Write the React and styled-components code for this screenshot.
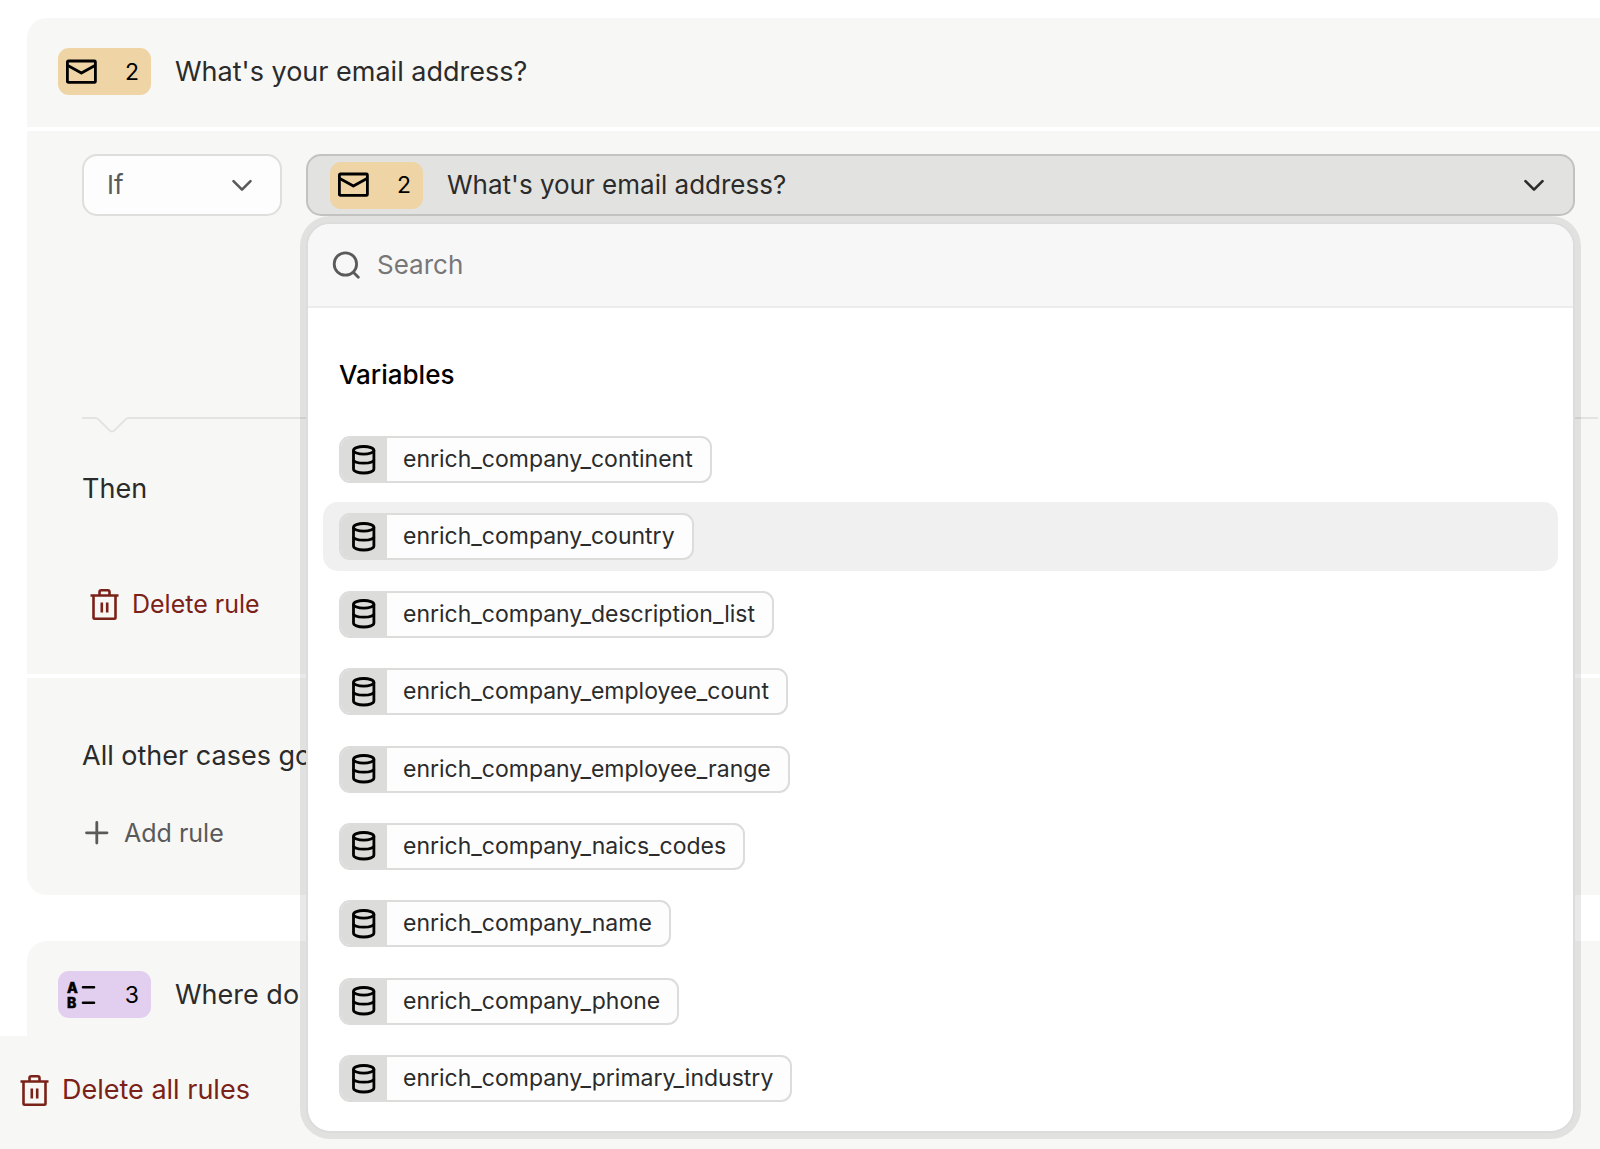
import React, { useState } from 'react';
import styled, { createGlobalStyle } from 'styled-components';

const GlobalStyle = createGlobalStyle`
  * {
    box-sizing: border-box;
  }

  body {
    margin: 0;
    background: #ffffff;
    color: #2b2b2b;
    font-family: Inter, 'Liberation Sans', sans-serif;
    font-size: 26px;
    line-height: 32px;
  }

  button,
  input,
  select {
    font: inherit;
    color: inherit;
  }
`;

const Page = styled.div`
  display: flex;
  flex-direction: column;
  min-height: 100vh;
  overflow: hidden;
`;

const Cards = styled.main`
  display: flex;
  flex-direction: column;
  gap: 46px;
  padding: 18px 0 0 27px;
`;

const Card = styled.section`
  display: flex;
  flex-direction: column;
  gap: 4px;
`;

const CardPart = styled.div`
  background: #f7f7f5;

  &:first-child {
    border-top-left-radius: 20px;
  }
`;

const CardHeader = styled(CardPart)`
  display: flex;
  align-items: center;
  gap: 24px;
  padding: 30px 31px ${(props) => (props.$short ? '18px' : '32px')};
`;

const RuleBody = styled(CardPart)`
  padding: 23px 0 46px 55px;
`;

const OtherCases = styled(CardPart)`
  padding: 62px 55px 38px;
  border-bottom-left-radius: 20px;
`;

const Title = styled.h2`
  margin: 0;
  font-size: 27px;
  font-weight: 400;
  white-space: nowrap;
`;

const Badge = styled.span`
  display: inline-flex;
  align-items: center;
  justify-content: space-between;
  flex: none;
  width: 93px;
  height: 47px;
  padding: 0 12px 0 7px;
  border-radius: 11px;
  background: ${(props) => props.$color};
  color: #000000;
  font-size: 23px;
`;

const Condition = styled.div`
  display: flex;
  gap: 24px;
  margin: 0 25px 201px 0;
`;

const OperatorField = styled.label`
  display: grid;
  align-items: center;
  width: 200px;
  height: 62px;
  color: #5a5a5a;

  > * {
    grid-area: 1 / 1;
  }

  svg {
    justify-self: end;
    margin-right: 29px;
    pointer-events: none;
  }
`;

const OperatorSelect = styled.select`
  width: 100%;
  height: 100%;
  padding: 0 23px;
  border: 2px solid #dededc;
  border-radius: 15px;
  background: #fdfdfd;
  appearance: none;
`;

const Picker = styled.div`
  position: relative;
  flex: 1;
`;

const PickerButton = styled.button`
  display: flex;
  align-items: center;
  gap: 24px;
  width: 100%;
  height: 62px;
  padding: 0 28px 0 22px;
  border: 2px solid #c2c2c0;
  border-radius: 15px;
  background: #e2e2e0;
  text-align: left;

  > svg {
    margin-left: auto;
  }
`;

const Popup = styled.div`
  position: absolute;
  z-index: 2;
  top: calc(100% + 6px);
  left: 0;
  right: 0;
  border: 2px solid #dcdcdc;
  border-radius: 24px;
  background: #ffffff;
  box-shadow: 0 0 0 6px rgba(0, 0, 0, 0.085);
`;

const SearchBar = styled.label`
  display: flex;
  align-items: center;
  gap: 17px;
  height: 84px;
  padding: 0 24px;
  border-bottom: 2px solid #ececec;
  border-radius: 22px 22px 0 0;
  background: #f7f7f7;
  color: #5a5a5a;
`;

const SearchInput = styled.input`
  flex: 1;
  min-width: 0;
  padding: 0;
  border: 0;
  outline: 0;
  background: transparent;

  &::placeholder {
    color: #777777;
    opacity: 1;
  }
`;

const GroupTitle = styled.h3`
  margin: 51px 31px 34px;
  color: #000000;
  font-size: 26px;
  font-weight: 500;
`;

const VariableList = styled.ul`
  display: flex;
  flex-direction: column;
  justify-content: space-between;
  min-height: 688px;
  margin: 0 15px 18px;
  padding: 0;
  list-style: none;
`;

const VariableOption = styled.button`
  display: flex;
  width: 100%;
  padding: 11px 16px;
  border: 0;
  border-radius: 15px;
  background: ${(props) => (props.$active ? '#f0f0f0' : 'transparent')};
`;

const Chip = styled.span`
  display: flex;
  height: 47px;
  border: 2px solid #dcdcda;
  border-radius: 11px;
  background: #fdfdfd;
  overflow: hidden;
`;

const ChipIcon = styled.span`
  display: flex;
  align-items: center;
  justify-content: center;
  width: 46px;
  background: #dcdcda;
  color: #000000;
`;

const ChipName = styled.span`
  padding: 0 17px 0 16px;
  font-size: 23px;
  line-height: 43px;
`;

const RuleDivider = styled.div`
  display: flex;
  height: 16px;
  margin-right: 2px;
  color: #e3e3e1;

  &::after {
    content: '';
    flex: 1;
    height: 2px;
    background: currentColor;
  }
`;

const Then = styled.p`
  margin: 40px 0 75px;
  font-size: 27px;
`;

const OtherText = styled.p`
  margin: 0 0 37px;
  font-size: 27px;
  white-space: nowrap;
`;

const TextButton = styled.button`
  display: inline-flex;
  align-items: center;
  gap: ${(props) => (props.$muted ? '14px' : '12px')};
  height: 48px;
  padding: 0 ${(props) => (props.$muted ? '2px' : '8px')};
  border: 0;
  background: transparent;
  color: ${(props) => (props.$muted ? '#5a5a5a' : '#7b2218')};
  font-size: ${(props) => (props.$large ? '27px' : '25px')};
`;

const Footer = styled.footer`
  flex: 1;
  padding: 30px 12px;
  background: #f7f7f5;
`;

const MailIcon = () => (
  <svg width="32" height="28" viewBox="0 0 32 28" fill="none" stroke="currentColor" strokeWidth="2.8" strokeLinejoin="round">
    <rect x="2.4" y="3" width="28" height="21.4" rx="1" />
    <path d="M2.800 7.6 16.400 15 30 7.6" />
  </svg>
);

const ChoiceIcon = () => (
  <svg width="32" height="40" viewBox="0 0 32 40" fill="currentColor">
    <text x="2" y="17.5" fontSize="14" fontWeight="800" stroke="currentColor" strokeWidth="0.5">A</text>
    <text x="2" y="33" fontSize="14" fontWeight="800" stroke="currentColor" strokeWidth="0.5">B</text>
    <path d="M18 12.300h11M18 27.800h11" stroke="currentColor" strokeWidth="2.6" strokeLinecap="round" />
  </svg>
);

const ChevronIcon = () => (
  <svg width="22" height="14" viewBox="0 0 22 14" fill="none" stroke="currentColor" strokeWidth="2.6" strokeLinecap="round" strokeLinejoin="round">
    <path d="m2.500 3.200 8.500 8.500 8.500-8.500" />
  </svg>
);

const SearchIcon = () => (
  <svg width="28" height="30" viewBox="0 0 28 30" fill="none" stroke="currentColor" strokeWidth="2.8" strokeLinecap="round">
    <circle cx="13.400" cy="14" r="11.200" />
    <path d="m21.300 22.200 5 5" />
  </svg>
);

const DatabaseIcon = () => (
  <svg width="24" height="30" viewBox="0 0 24 30" fill="none" stroke="currentColor" strokeWidth="2.8">
    <ellipse cx="11.700" cy="5.300" rx="10.200" ry="3.800" />
    <path d="M1.500 5.300v18.700c0 2.300 4.500 4 10.200 4s10.200-1.700 10.200-4V5.300" />
    <path d="M1.500 14.800c0 2 4.500 3.400 10.200 3.400s10.200-1.400 10.200-3.400" />
  </svg>
);

const TrashIcon = () => (
  <svg width="30" height="32" viewBox="0 0 30 32" fill="none" stroke="currentColor" strokeWidth="2.600" strokeLinejoin="round">
    <path d="M.500 7.500h28M9.500 7.500V4c0-1 .7-1.800 1.800-1.800h6.400c1.100 0 1.800.8 1.800 1.800v3.500" />
    <path d="M3.500 7.500v22c0 .7.500 1.200 1.200 1.200h19.600c.7 0 1.200-.5 1.200-1.200v-22" />
    <path d="M11.800 14.500v10M17.200 14.500v10" />
  </svg>
);

const PlusIcon = () => (
  <svg width="26" height="26" viewBox="0 0 26 26" fill="none" stroke="currentColor" strokeWidth="2.800" strokeLinecap="round">
    <path d="M12.800 2.500v20.500M2.500 12.800h20.500" />
  </svg>
);

const NotchIcon = () => (
  <svg width="50" height="16" viewBox="0 0 50 16" fill="none" stroke="currentColor" strokeWidth="2">
    <path d="M0 1h13c1.500 0 2.500.4 3.500 1.400l11 11c1.500 1.500 3.500 1.500 5 0l11-11C44.500 1.400 45.500 1 47 1h3" />
  </svg>
);

const variables = [
  'enrich_company_continent',
  'enrich_company_country',
  'enrich_company_description_list',
  'enrich_company_employee_count',
  'enrich_company_employee_range',
  'enrich_company_naics_codes',
  'enrich_company_name',
  'enrich_company_phone',
  'enrich_company_primary_industry',
];

const App = () => {
  const [active, setActive] = useState('enrich_company_country');
  const [search, setSearch] = useState('');

  const visible = variables.filter((name) => name.includes(search.toLowerCase()));

  return (
    <>
      <GlobalStyle />
      <Page>
        <Cards>
          <Card>
            <CardHeader>
              <Badge $color="#efd4a6"><MailIcon />2</Badge>
              <Title>What's your email address?</Title>
            </CardHeader>
            <RuleBody>
              <Condition>
                <OperatorField>
                  <OperatorSelect aria-label="Operator" defaultValue="if">
                    <option value="if">If</option>
                  </OperatorSelect>
                  <ChevronIcon />
                </OperatorField>
                <Picker>
                  <PickerButton type="button" aria-haspopup="listbox" aria-expanded="true">
                    <Badge $color="#efd4a6"><MailIcon />2</Badge>
                    What's your email address?
                    <ChevronIcon />
                  </PickerButton>
                  <Popup>
                    <SearchBar>
                      <SearchIcon />
                      <SearchInput
                        type="text"
                        aria-label="Search"
                        placeholder="Search"
                        value={search}
                        onChange={(e) => setSearch(e.target.value)}
                      />
                    </SearchBar>
                    <GroupTitle>Variables</GroupTitle>
                    <VariableList>
                      {visible.map((name) => (
                        <li key={name}>
                          <VariableOption
                            type="button"
                            $active={name === active}
                            onMouseEnter={() => setActive(name)}
                          >
                            <Chip>
                              <ChipIcon><DatabaseIcon /></ChipIcon>
                              <ChipName>{name}</ChipName>
                            </Chip>
                          </VariableOption>
                        </li>
                      ))}
                    </VariableList>
                  </Popup>
                </Picker>
              </Condition>
              <RuleDivider><NotchIcon /></RuleDivider>
              <Then>Then</Then>
              <TextButton type="button"><TrashIcon />Delete rule</TextButton>
            </RuleBody>
            <OtherCases>
              <OtherText>All other cases go to</OtherText>
              <TextButton type="button" $muted><PlusIcon />Add rule</TextButton>
            </OtherCases>
          </Card>
          <Card>
            <CardHeader $short>
              <Badge $color="#e2cfef"><ChoiceIcon />3</Badge>
              <Title>Where do you</Title>
            </CardHeader>
          </Card>
        </Cards>
        <Footer>
          <TextButton type="button" $large><TrashIcon />Delete all rules</TextButton>
        </Footer>
      </Page>
    </>
  );
};

export default App;
